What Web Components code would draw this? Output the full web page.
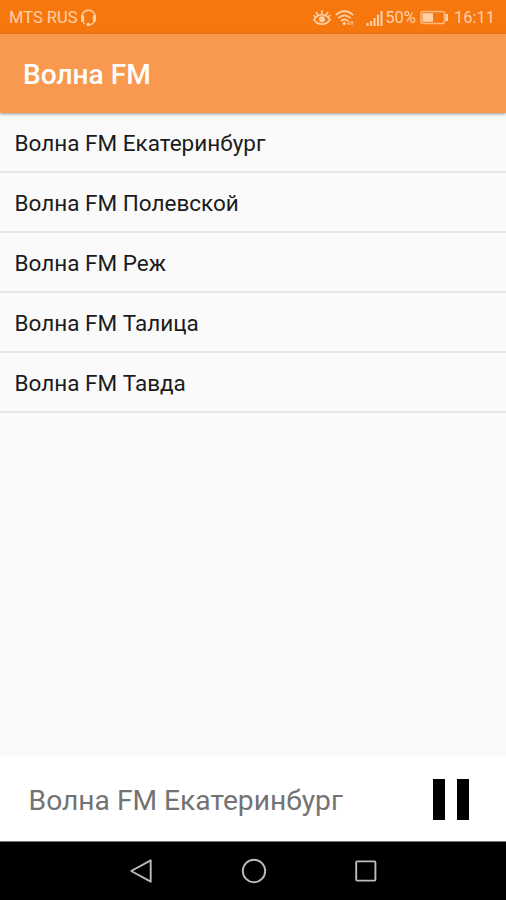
<!DOCTYPE html>
<html lang="ru">
<head>
<meta charset="utf-8">
<title>Волна FM</title>
<style>
    html, body {
        height: 100%;
        margin: 0;
    }

    body {
        font-family: Roboto, "Noto Sans", sans-serif;
        background: #fafafa;
        overflow: hidden;
    }
</style>
</head>
<body>

<template id="status-bar">
    <style>
        :host {
            display: flex;
            align-items: center;
            flex: none;
            height: 34px;
            box-sizing: border-box;
            padding: 2px 11px 0 9px;
            background: #f7770f;
            color: #ffd0a6;
            font-size: 16.5px;
            line-height: 20px;
            white-space: nowrap;
        }

        svg {
            display: block;
            flex: none;
            fill: none;
            stroke: currentColor;
        }

        .spacer { flex: 1; }
        .headset { margin-left: 3px; }
        .wifi { margin: 0 12px 0 4px; }
        .signal { margin-right: 2px; }
        .percent { margin-top: -1px; }
        .battery { margin: -1px 5px 0 4px; }
    </style>
    <span><slot name="carrier"></slot></span>
    <svg class="headset" width="17" height="18" viewBox="0 0 17 18">
        <path d="M1.7 9V8a6.8 6.8 0 0 1 13.6 0v1" stroke-width="1.5"/>
        <path d="M2.6 7.5v4M14.4 7.5v4" stroke-width="3.2" stroke-linecap="round"/>
        <path d="M14.6 11.5c-.6 2.5-2.6 4-5.6 4.3M2.4 12c.5 1 1.2 2 2.4 2.7" stroke-width="1.3"/>
        <circle cx="8.3" cy="15.5" r="1.8" fill="currentColor" stroke="none"/>
    </svg>
    <span class="spacer"></span>
    <svg width="18" height="18" viewBox="0 0 18 18">
        <path d="M1 10.7c4-6.6 12-6.6 16 0-4 6-12 6-16 0z" stroke-width="1.7"/>
        <circle cx="9" cy="10.3" r="3" fill="currentColor" stroke="none"/>
        <path d="M9 5.2V1.3M5 6 3 3M13 6l2-3M2.5 8 .7 6M15.5 8l1.8-2" stroke-width="1.5"/>
    </svg>
    <svg class="wifi" width="19" height="18" viewBox="0 0 19 18">
        <path d="M.8 6.2c5-5.3 12.4-5.3 17.4 0M3.4 9.2c3.6-3.7 8.6-3.7 12.2 0M6.2 12c2-2 4.6-2 6.6 0" stroke-width="1.8"/>
        <circle cx="9.3" cy="14.5" r="1.6" fill="currentColor" stroke="none"/>
        <path d="M13.8 12v3.6m-1.5-1.4 1.5 1.5 1.5-1.5M17 16v-3.6m-1.3 1.4 1.3-1.4 1.3 1.4" stroke-width="1"/>
    </svg>
    <svg class="signal" width="17" height="17" viewBox="0 0 17 17">
        <path d="M1.5 13v3M5 11v5M8.5 8v8M12 4.5V16M15.5 1v15" stroke-width="2.1"/>
    </svg>
    <span class="percent"><slot name="percent"></slot></span>
    <svg class="battery" width="29" height="15" viewBox="0 0 29 15">
        <rect x="1" y="1.5" width="23.5" height="12" rx="2" stroke-width="1.5" stroke-opacity=".75"/>
        <path d="M2.5 3.2h10.5v8.6H2.5z" fill="currentColor" stroke="none"/>
        <path d="M26.7 4v7" stroke-width="2.6"/>
    </svg>
    <span><slot name="time"></slot></span>
</template>

<template id="app-bar">
    <style>
        :host {
            display: flex;
            align-items: center;
            flex: none;
            height: 79px;
            box-sizing: border-box;
            padding: 2px 23px 0;
            position: relative;
            background: #f8994f;
            color: #fff;
            font-size: 28.1px;
            font-weight: 500;
            box-shadow: 0 1px 3px rgba(40, 60, 80, 0.5);
        }
    </style>
    <slot></slot>
</template>

<template id="station-item">
    <style>
        :host {
            display: flex;
            align-items: center;
            height: 60px;
            box-sizing: border-box;
            padding: 2px 14.6px 0;
            border-bottom: 2px solid #e6e6e6;
            color: #1c1c1c;
            font-size: 22.5px;
        }
    </style>
    <slot></slot>
</template>

<template id="station-list">
    <style>
        :host {
            display: block;
            flex: 1;
            min-height: 0;
            background: #fafafa;
        }
    </style>
    <slot></slot>
</template>

<template id="player-bar">
    <style>
        :host {
            display: flex;
            align-items: center;
            justify-content: space-between;
            flex: none;
            height: 85px;
            box-sizing: border-box;
            padding: 2px 37px 0 28.6px;
            background: #fff;
            color: #737373;
            font-size: 28.2px;
        }

        .station {
            padding-top: 2px;
        }

        button {
            display: flex;
            justify-content: space-between;
            width: 36.5px;
            height: 41px;
            padding: 0;
            border: none;
            background: none;
        }

        button i {
            width: 12.5px;
            background: #000;
        }
    </style>
    <span class="station"><slot></slot></span>
    <button aria-label="Пауза"><i></i><i></i></button>
</template>

<template id="nav-bar">
    <style>
        :host {
            display: flex;
            align-items: center;
            justify-content: center;
            gap: 86.5px;
            flex: none;
            height: 59px;
            box-sizing: border-box;
            padding: 0 0 1px 1px;
            border-top: 1px solid #777;
            background: #000;
        }

        svg {
            display: block;
            fill: none;
            stroke: #bcbcbc;
            stroke-width: 1.9;
            stroke-linejoin: round;
        }
    </style>
    <svg width="26" height="26" viewBox="0 0 26 26"><path d="M22.7 2.3v21.4L3.2 13z"/></svg>
    <svg width="26" height="26" viewBox="0 0 26 26"><circle cx="13" cy="13" r="11.2"/></svg>
    <svg width="26" height="26" viewBox="0 0 26 26"><rect x="3.2" y="3.4" width="19.2" height="19.2" rx="1"/></svg>
</template>

<template id="radio-app">
    <style>
        :host {
            display: flex;
            flex-direction: column;
            height: 100vh;
        }
    </style>
    <slot></slot>
</template>

<radio-app>
    <status-bar>
        <span slot="carrier">MTS RUS</span>
        <span slot="percent">50%</span>
        <span slot="time">16:11</span>
    </status-bar>
    <app-bar>Волна FM</app-bar>
    <station-list>
        <station-item>Волна FM Екатеринбург</station-item>
        <station-item>Волна FM Полевской</station-item>
        <station-item>Волна FM Реж</station-item>
        <station-item>Волна FM Талица</station-item>
        <station-item>Волна FM Тавда</station-item>
    </station-list>
    <player-bar>Волна FM Екатеринбург</player-bar>
    <nav-bar></nav-bar>
</radio-app>

<script>
    class TemplateElement extends HTMLElement {
        constructor() {
            super();

            const shadow = this.attachShadow({ mode: 'open' });
            const template = document.getElementById(this.localName);
            shadow.appendChild(template.content.cloneNode(true));
        }
    }

    customElements.define('radio-app', class extends TemplateElement {});
    customElements.define('status-bar', class extends TemplateElement {});
    customElements.define('app-bar', class extends TemplateElement {});
    customElements.define('station-list', class extends TemplateElement {});
    customElements.define('station-item', class extends TemplateElement {});
    customElements.define('player-bar', class extends TemplateElement {});
    customElements.define('nav-bar', class extends TemplateElement {});
</script>
</body>
</html>
